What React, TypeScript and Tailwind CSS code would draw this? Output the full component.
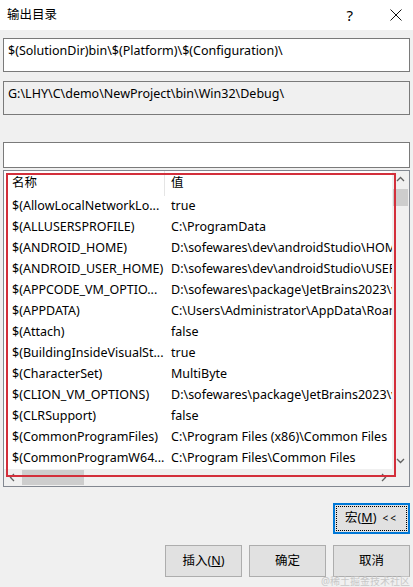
import React from "react";

const rows: [string, string][] = [
  ["$(AllowLocalNetworkLo...", "true"],
  ["$(ALLUSERSPROFILE)", "C:\\ProgramData"],
  ["$(ANDROID_HOME)", "D:\\sofewares\\dev\\androidStudio\\HOME"],
  ["$(ANDROID_USER_HOME)", "D:\\sofewares\\dev\\androidStudio\\USERHOME"],
  ["$(APPCODE_VM_OPTIO...", "D:\\sofewares\\package\\JetBrains2023\\vmoptions"],
  ["$(APPDATA)", "C:\\Users\\Administrator\\AppData\\Roaming"],
  ["$(Attach)", "false"],
  ["$(BuildingInsideVisualSt...", "true"],
  ["$(CharacterSet)", "MultiByte"],
  ["$(CLION_VM_OPTIONS)", "D:\\sofewares\\package\\JetBrains2023\\vmoptions"],
  ["$(CLRSupport)", "false"],
  ["$(CommonProgramFiles)", "C:\\Program Files (x86)\\Common Files"],
  ["$(CommonProgramW64...", "C:\\Program Files\\Common Files"],
];

const font = "font-['Noto_Sans','Noto_Sans_CJK_SC',sans-serif]";

const Arrow = ({ dir }: { dir: "up" | "down" | "left" | "right" }) => {
  const d = {
    up: "M1 6 L4.5 2.5 L8 6",
    down: "M1 3 L4.5 6.5 L8 3",
    left: "M6 1 L2.5 4.5 L6 8",
    right: "M3 1 L6.5 4.5 L3 8",
  }[dir];
  return (
    <svg width="9" height="9" viewBox="0 0 9 9">
      <path d={d} fill="none" stroke="#606060" strokeWidth="1.3" />
    </svg>
  );
};

const App = () => {
  return (
    <div className={`w-[413px] h-[587px] bg-[#f0f0f0] text-[12.5px] text-black flex flex-col relative ${font}`}>
      {/* title bar */}
      <div className="h-[30px] bg-white flex items-center pl-[7px] shrink-0">
        <span className="text-[12.5px]">输出目录</span>
        <span className="ml-auto mr-[36px] text-[15px]">?</span>
        <svg width="14" height="14" viewBox="0 0 14 14" className="mr-[10px]">
          <path d="M1.5 1.5 L12.5 12.5 M12.5 1.5 L1.5 12.5" stroke="#111" strokeWidth="1" />
        </svg>
      </div>

      <div className="mx-[3px] flex flex-col">
        <div className="mt-[8px] h-[34px] bg-white border border-[#7a7a7a] px-[4px] pt-[3px] leading-[18px] whitespace-nowrap">
          $(SolutionDir)bin\$(Platform)\$(Configuration)\
        </div>
        <div className="mt-[9px] h-[34px] bg-[#f0f0f0] border border-[#7a7a7a] px-[4px] pt-[3px] leading-[18px] whitespace-nowrap">
          G:\LHY\C\demo\NewProject\bin\Win32\Debug\
        </div>
        <div className="mt-[27px] h-[26px] bg-white border border-[#7a7a7a]" />

        {/* list */}
        <div className="mt-[2px] h-[317px] bg-white border border-[#828790] flex flex-col">
          <div className="flex flex-1 min-h-0">
            <div className="flex-1 overflow-hidden">
              <div className="h-[25px] flex items-center whitespace-nowrap">
                <div className="w-[161px] h-full flex items-center pl-[8px] border-r border-[#e5e5e5]">名称</div>
                <div className="pl-[6px]">值</div>
              </div>
              {rows.map(([k, v]) => (
                <div key={k} className="h-[21px] flex items-center whitespace-nowrap">
                  <div className="w-[161px] shrink-0 pl-[8px] overflow-hidden">{k}</div>
                  <div className="pl-[6px] shrink-0">{v}</div>
                </div>
              ))}
            </div>
            <div className="w-[17px] bg-[#f0f0f0] flex flex-col items-center">
              <div className="h-[17px] flex items-center justify-center">
                <Arrow dir="up" />
              </div>
              <div className="mt-[1px] w-[15px] h-[17px] bg-[#cdcdcd]" />
              <div className="mt-auto h-[17px] flex items-center justify-center">
                <Arrow dir="down" />
              </div>
            </div>
          </div>
          <div className="h-[17px] flex shrink-0">
            <div className="flex-1 bg-[#f0f0f0] flex items-center">
              <div className="w-[17px] flex justify-center">
                <Arrow dir="left" />
              </div>
              <div className="ml-[1px] w-[62px] h-[15px] bg-[#cdcdcd]" />
              <div className="ml-auto w-[17px] flex justify-center">
                <Arrow dir="right" />
              </div>
            </div>
            <div className="w-[17px] bg-[#f0f0f0]" />
          </div>
        </div>

        {/* buttons */}
        <div className="mt-[16px] flex justify-end">
          <button className="w-[77px] h-[31px] bg-[#e1e1e1] border-2 border-[#0078d7] p-[1px]">
            <div className="w-full h-full border border-dotted border-black flex items-center justify-center">
              <span>
                宏(<span className="underline">M</span>)
              </span>
              <span className="ml-[6px] text-[10px] tracking-[2px]">&lt;&lt;</span>
            </div>
          </button>
        </div>
        <div className="mt-[11px] flex justify-end gap-[7px]">
          <button className="w-[77px] h-[32px] bg-[#e1e1e1] border border-[#adadad]">
            插入(<span className="underline">N</span>)
          </button>
          <button className="w-[77px] h-[32px] bg-[#e1e1e1] border border-[#adadad]">确定</button>
          <button className="w-[77px] h-[32px] bg-[#e1e1e1] border border-[#adadad]">取消</button>
        </div>
      </div>

      {/* annotation */}
      <div className="absolute left-[6px] top-[173px] w-[390px] h-[304px] border-2 border-[#d32f3b] pointer-events-none" />
      <div className="absolute right-[3px] bottom-[0px] text-[10px] leading-[11px] text-[#c8c8c8]">@稀土掘金技术社区</div>
    </div>
  );
};

export default App;
